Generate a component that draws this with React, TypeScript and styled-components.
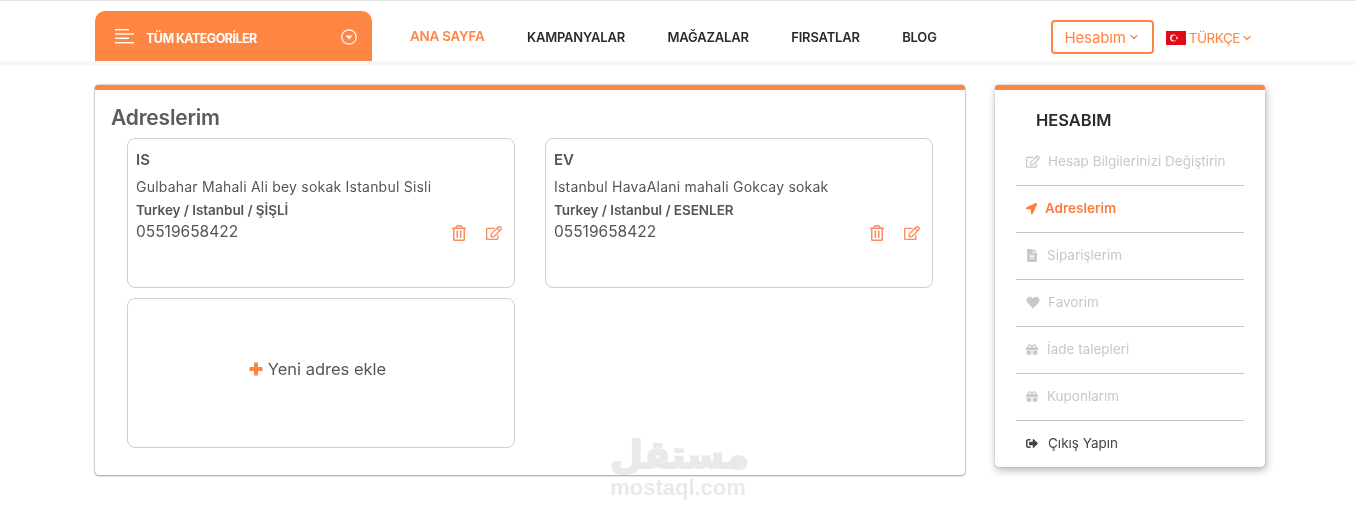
import { FC, ReactNode } from 'react'
import styled, { createGlobalStyle } from 'styled-components'
import { FaFileAlt, FaGift, FaHeart, FaLocationArrow, FaRegEdit, FaRegTrashAlt, FaSignOutAlt } from 'react-icons/fa'
import { FiChevronDown } from 'react-icons/fi'

const orange = '#ff8542'

const GlobalStyle = createGlobalStyle`
  html, body {
    margin: 0;
    padding: 0;
    background: #fff;
    font-family: Inter, "Open Sans", sans-serif;
    color: #555;
  }
  * { box-sizing: border-box; }
`

const Page = styled.div`
  position: relative;
  width: 1356px;
  height: 510px;
  overflow: hidden;
  border-top: 1px solid #e2e2e2;
`

const Header = styled.header`
  height: 64px;
  border-bottom: 4px solid #f8f8f8;
  padding-top: 10px;
`

const Container = styled.div`
  width: 1170px;
  margin-left: 95px;
  display: flex;
  align-items: flex-start;
`

const CategoryButton = styled.div`
  width: 277px;
  height: 50px;
  background: ${orange};
  border-radius: 10px 10px 0 0;
  display: flex;
  align-items: center;
  padding: 0 15px 0 20px;
  color: #fff;
  font-size: 12.5px;
  font-weight: 700;
  letter-spacing: -0.55px;
`

const CategoryLabel = styled.span`
  flex: 1;
  margin-left: 12px;
  padding-top: 4px;
`

const Nav = styled.nav`
  display: flex;
  align-items: center;
  height: 50px;
  margin-left: 38px;
  padding-top: 2px;
  gap: 42.5px;
`

const NavLink = styled.a<{ $active?: boolean }>`
  font-size: ${(props) => (props.$active ? '13.4px' : '13px')};
  font-weight: 600;
  letter-spacing: -0.2px;
  color: ${(props) => (props.$active ? orange : '#2b2b2b')};
  margin-top: ${(props) => (props.$active ? '-2px' : '0')};
`

const HeaderRight = styled.div`
  margin-left: auto;
  display: flex;
  align-items: center;
  height: 34px;
  margin-top: 9px;
  margin-right: 12px;
  gap: 12px;
`

const AccountButton = styled.div`
  width: 103px;
  height: 34px;
  border: 2px solid ${orange};
  border-radius: 4px;
  display: flex;
  align-items: center;
  justify-content: center;
  gap: 2px;
  font-size: 15px;
  letter-spacing: -0.1px;
  color: ${orange};
`

const Language = styled.div`
  display: flex;
  align-items: center;
  gap: 1px;
  padding-top: 1px;
  font-size: 13.5px;
  letter-spacing: -0.45px;
  color: ${orange};
`

const FlagSvg = styled.svg`
  margin-right: 2px;
`

const CaretSvg = styled.svg`
  margin-top: 1px;
`

const Main = styled(Container)`
  margin-top: 20px;
  gap: 30px;
`

const Card = styled.section`
  background: #fff;
  border-top: 5px solid ${orange};
  border-radius: 4px;
`

const AddressPanel = styled(Card)`
  width: 870px;
  height: 390px;
  padding: 15px 16px 0;
  box-shadow: 0 0 2px rgba(0, 0, 0, 0.5), 0 1px 2px rgba(0, 0, 0, 0.25);
`

const Title = styled.h2`
  margin: 0;
  font-size: 21px;
  line-height: 26px;
  font-weight: 600;
  letter-spacing: -0.2px;
  color: #5c5c5c;
`

const AddressGrid = styled.div`
  display: grid;
  grid-template-columns: 388px 388px;
  grid-auto-rows: 150px;
  column-gap: 30px;
  row-gap: 10px;
  margin: 7px 0 0 16px;
`

const AddressBox = styled.div`
  position: relative;
  border: 1px solid #cfcfcf;
  border-radius: 8px;
  padding: 11px 8px;
`

const AddressName = styled.div`
  font-size: 15px;
  line-height: 20px;
  font-weight: 600;
  color: #555;
`

const AddressLine = styled.div`
  margin-top: 7px;
  font-size: 14px;
  line-height: 20px;
  letter-spacing: 0.22px;
`

const AddressRegion = styled.div`
  margin-top: 3px;
  font-size: 13.5px;
  line-height: 20px;
  font-weight: 600;
  letter-spacing: -0.05px;
`

const Phone = styled.div`
  margin-top: 1px;
  font-size: 15.5px;
  line-height: 22px;
`

const Actions = styled.div`
  position: absolute;
  top: 86px;
  right: 12px;
  display: flex;
  align-items: center;
  gap: 19px;
  color: #ff8a5c;
  font-size: 16px;
`

const AddBox = styled(AddressBox)`
  display: flex;
  align-items: center;
  justify-content: center;
  gap: 5px;
  padding: 0 7px 8px 0;
  font-size: 16.5px;
  color: #555;
`

const Sidebar = styled(Card)`
  width: 270px;
  height: 382px;
  padding: 0 21px;
  box-shadow: 0 0 1px rgba(0, 0, 0, 0.5), 1px 3px 8px rgba(0, 0, 0, 0.3);
`

const SidebarTitle = styled.h3`
  margin: 0;
  padding: 18px 0 0 20px;
  height: 49px;
  font-size: 16.5px;
  line-height: 24px;
  font-weight: 600;
  color: #2b2b2b;
`

type Tone = 'muted' | 'active' | 'dark'

const MenuItem = styled.div<{ $tone: Tone; $iconWidth: number; $gap: number }>`
  height: 47px;
  display: flex;
  align-items: center;
  padding: 0 0 2px 10px;
  font-size: 13.5px;
  gap: ${(props) => props.$gap}px;
  font-weight: ${(props) => (props.$tone === 'active' ? 600 : 400)};
  color: ${(props) => (props.$tone === 'active' ? '#ff7a3d' : props.$tone === 'dark' ? '#444' : '#c8c8c8')};
  border-bottom: 1px solid #c4c4c4;

  &:last-child {
    border-bottom-color: transparent;
  }

  svg {
    flex: none;
    width: ${(props) => props.$iconWidth}px;
    height: 13px;
  }
`

const Watermark = styled.div`
  position: absolute;
  left: 610px;
  top: 431px;
  width: 136px;
  text-align: center;
  color: #e9e9e9;
  font-family: "DejaVu Sans", sans-serif;
  mix-blend-mode: multiply;
  pointer-events: none;
`

const WatermarkArabic = styled.div`
  font-size: 38px;
  line-height: 46px;
  font-weight: 700;
  -webkit-text-stroke: 2px #e9e9e9;
`

const WatermarkLatin = styled.div`
  font-family: "Liberation Sans", sans-serif;
  font-size: 22px;
  line-height: 20px;
  font-weight: 700;
`

const addresses = [
  { name: 'IS', line: 'Gulbahar Mahali Ali bey sokak Istanbul Sisli', region: 'Turkey / Istanbul / ŞİŞLİ' },
  { name: 'EV', line: 'Istanbul HavaAlani mahali Gokcay sokak', region: 'Turkey / Istanbul / ESENLER' },
]

const menu: { icon: ReactNode; label: string; tone: Tone; iconWidth: number; gap: number }[] = [
  { icon: <FaRegEdit />, label: 'Hesap Bilgilerinizi Değiştirin', tone: 'muted', iconWidth: 14, gap: 8 },
  { icon: <FaLocationArrow />, label: 'Adreslerim', tone: 'active', iconWidth: 11, gap: 8 },
  { icon: <FaFileAlt />, label: 'Siparişlerim', tone: 'muted', iconWidth: 12, gap: 9 },
  { icon: <FaHeart />, label: 'Favorim', tone: 'muted', iconWidth: 14, gap: 8 },
  { icon: <FaGift />, label: 'İade talepleri', tone: 'muted', iconWidth: 12, gap: 9 },
  { icon: <FaGift />, label: 'Kuponlarım', tone: 'muted', iconWidth: 12, gap: 9 },
  { icon: <FaSignOutAlt />, label: 'Çıkış Yapın', tone: 'dark', iconWidth: 12, gap: 10 },
]

const MenuIcon: FC = () => (
  <svg width="19" height="15" viewBox="0 0 19 15" fill="#fff">
    <rect x="0" y="0" width="14" height="1.4" />
    <rect x="0" y="4.3" width="19" height="1.4" />
    <rect x="0" y="8.6" width="14" height="1.4" />
    <rect x="0" y="13" width="19" height="1.4" />
  </svg>
)

const CircleCaret: FC = () => (
  <CaretSvg width="16" height="16" viewBox="0 0 16 16" fill="none">
    <circle cx="8" cy="8" r="7.2" stroke="#fff" strokeWidth="1.2" />
    <path d="M4.4 6.6h7.2L8 10.6z" fill="#fff" />
  </CaretSvg>
)

const TurkishFlag: FC = () => (
  <FlagSvg width="20" height="14" viewBox="0 0 20 14">
    <rect width="20" height="14" fill="#e30a17" />
    <circle cx="7.5" cy="7" r="3.4" fill="#fff" />
    <circle cx="8.4" cy="7" r="2.7" fill="#e30a17" />
    <circle cx="11" cy="7" r="0.9" fill="#fff" />
  </FlagSvg>
)

const PlusIcon: FC = () => (
  <svg width="14" height="14" viewBox="0 0 14 14" fill={orange}>
    <path d="M5 0.500h4v4.500h4.500v4H9v4.500H5V9H0.500V5H5z" />
  </svg>
)

const App: FC = () => (
  <Page>
    <GlobalStyle />
    <Header>
      <Container>
        <CategoryButton>
          <MenuIcon />
          <CategoryLabel>TÜM KATEGORİLER</CategoryLabel>
          <CircleCaret />
        </CategoryButton>
        <Nav>
          <NavLink $active>ANA SAYFA</NavLink>
          <NavLink>KAMPANYALAR</NavLink>
          <NavLink>MAĞAZALAR</NavLink>
          <NavLink>FIRSATLAR</NavLink>
          <NavLink>BLOG</NavLink>
        </Nav>
        <HeaderRight>
          <AccountButton>
            Hesabım <FiChevronDown size={12} strokeWidth={2.5} />
          </AccountButton>
          <Language>
            <TurkishFlag />
            TÜRKÇE <FiChevronDown size={12} strokeWidth={2.5} />
          </Language>
        </HeaderRight>
      </Container>
    </Header>
    <Main>
      <AddressPanel>
        <Title>Adreslerim</Title>
        <AddressGrid>
          {addresses.map((item) => (
            <AddressBox key={item.name}>
              <AddressName>{item.name}</AddressName>
              <AddressLine>{item.line}</AddressLine>
              <AddressRegion>{item.region}</AddressRegion>
              <Phone>05519658422</Phone>
              <Actions>
                <FaRegTrashAlt />
                <FaRegEdit />
              </Actions>
            </AddressBox>
          ))}
          <AddBox>
            <PlusIcon /> Yeni adres ekle
          </AddBox>
        </AddressGrid>
      </AddressPanel>
      <Sidebar>
        <SidebarTitle>HESABIM</SidebarTitle>
        {menu.map((item) => (
          <MenuItem key={item.label} $tone={item.tone} $iconWidth={item.iconWidth} $gap={item.gap}>
            {item.icon}
            {item.label}
          </MenuItem>
        ))}
      </Sidebar>
    </Main>
    <Watermark>
      <WatermarkArabic>مستقل</WatermarkArabic>
      <WatermarkLatin>mostaql.com</WatermarkLatin>
    </Watermark>
  </Page>
)

export default App
